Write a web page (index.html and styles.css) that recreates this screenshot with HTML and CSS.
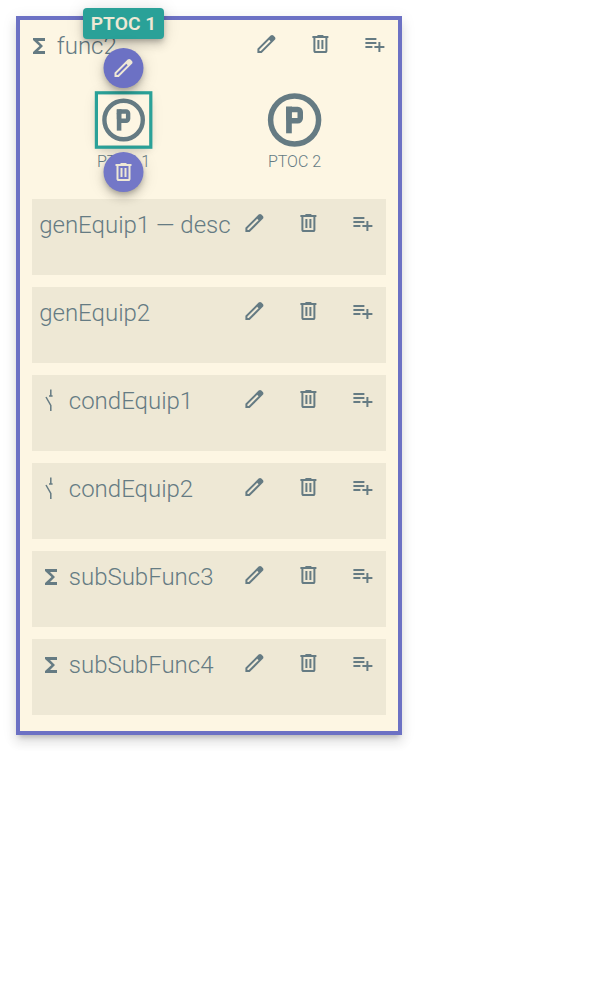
FILE: index.html
```html
<!DOCTYPE html>
<html lang="en">
<head>
<meta charset="utf-8">
<title>func2</title>
<link rel="stylesheet" href="styles.css">
</head>
<body>
<svg class="defs" aria-hidden="true">
  <symbol id="edit" viewBox="0 -960 960 960"><path d="M200-200h57l391-391-57-57-391 391v57Zm-80 80v-170l528-527q12-11 26.500-17t30.500-6q16 0 31 6t26 18l55 56q12 11 17.500 26t5.500 30q0 16-5.500 30.500T817-647L290-120H120Zm528-471-57-57 113-112 56 56Z"/></symbol>
  <symbol id="delete" viewBox="0 0 24 24"><path d="M7 21q-.825 0-1.412-.587Q5 19.825 5 19V6H4V4h5V3h6v1h5v2h-1v13q0 .825-.587 1.413Q17.825 21 17 21ZM17 6H7v13h10ZM9 17h2V8H9Zm4 0h2V8h-2ZM7 6v13Z"/></symbol>
  <symbol id="add" viewBox="0 0 24 24"><path d="M3 16v-2h7v2Zm0-4v-2h11v2Zm0-4V6h11v2Zm13 12v-4h-4v-2h4v-4h2v4h4v2h-4v4Z"/></symbol>
  <symbol id="functions" viewBox="0 0 24 24"><path d="M18 4H6v2l6.500 6L6 18v2h12v-3h-7l5-5-5-5h7Z"/></symbol>
  <symbol id="switch" viewBox="0 0 24 24"><path class="line" d="M11.800 .5v7M10 7h3.600M7 8l4.800 8.500v5.500"/></symbol>
  <symbol id="protection" viewBox="0 0 64 64">
    <circle class="ring" cx="32" cy="32" r="24"/>
    <rect x="23.500" y="18.700" width="5.700" height="26.600"/>
    <rect class="bowl" x="26.250" y="21.450" width="11.400" height="11.400" rx="2.500"/>
    <rect x="23.500" y="18.700" width="5.700" height="6"/>
  </symbol>
</svg>
<main class="pane">
  <header class="bar">
    <h1 class="title"><svg class="icon lead"><use href="#functions"/></svg>func2</h1>
    <nav class="actions"><svg class="icon"><use href="#edit"/></svg><svg class="icon"><use href="#delete"/></svg><svg class="icon"><use href="#add"/></svg></nav>
  </header>
  <section class="nodes">
    <div class="node">
      <svg class="symbol selected"><use href="#protection"/></svg>
      <span class="caption">PTOC 1</span>
      <span class="tag">PTOC 1</span>
      <button class="fab top" aria-label="Edit"><svg class="icon"><use href="#edit"/></svg></button>
      <button class="fab bottom" aria-label="Delete"><svg class="icon"><use href="#delete"/></svg></button>
    </div>
    <div class="node">
      <svg class="symbol"><use href="#protection"/></svg>
      <span class="caption">PTOC 2</span>
    </div>
  </section>
  <section class="children">
    <article class="child bar">
      <h2 class="title">genEquip1 — desc</h2>
      <nav class="actions"><svg class="icon"><use href="#edit"/></svg><svg class="icon"><use href="#delete"/></svg><svg class="icon"><use href="#add"/></svg></nav>
    </article>
    <article class="child bar">
      <h2 class="title">genEquip2</h2>
      <nav class="actions"><svg class="icon"><use href="#edit"/></svg><svg class="icon"><use href="#delete"/></svg><svg class="icon"><use href="#add"/></svg></nav>
    </article>
    <article class="child bar">
      <h2 class="title"><svg class="icon lead"><use href="#switch"/></svg>condEquip1</h2>
      <nav class="actions"><svg class="icon"><use href="#edit"/></svg><svg class="icon"><use href="#delete"/></svg><svg class="icon"><use href="#add"/></svg></nav>
    </article>
    <article class="child bar">
      <h2 class="title"><svg class="icon lead"><use href="#switch"/></svg>condEquip2</h2>
      <nav class="actions"><svg class="icon"><use href="#edit"/></svg><svg class="icon"><use href="#delete"/></svg><svg class="icon"><use href="#add"/></svg></nav>
    </article>
    <article class="child bar">
      <h2 class="title"><svg class="icon lead"><use href="#functions"/></svg>subSubFunc3</h2>
      <nav class="actions"><svg class="icon"><use href="#edit"/></svg><svg class="icon"><use href="#delete"/></svg><svg class="icon"><use href="#add"/></svg></nav>
    </article>
    <article class="child bar">
      <h2 class="title"><svg class="icon lead"><use href="#functions"/></svg>subSubFunc4</h2>
      <nav class="actions"><svg class="icon"><use href="#edit"/></svg><svg class="icon"><use href="#delete"/></svg><svg class="icon"><use href="#add"/></svg></nav>
    </article>
  </section>
</main>
</body>
</html>
```
FILE: styles.css
```css
* { box-sizing: border-box; }
body {
  margin: 0;
  padding: 16px;
  background: #fff;
  color: #657b83;
  font-family: Roboto, sans-serif;
}
.defs { position: absolute; width: 0; height: 0; }
.pane {
  width: 386px;
  height: 719px;
  border: 4px solid #6c71c4;
  background: #fdf6e3;
  box-shadow: 0 8px 10px 1px rgba(0,0,0,.07), 0 3px 14px 2px rgba(0,0,0,.06), 0 5px 5px -3px rgba(0,0,0,.2);
}
.bar {
  display: flex;
  justify-content: space-between;
  align-items: flex-start;
}
.title {
  display: flex;
  margin: 0;
  padding: 4px 0 0 7.2px;
  font-size: 24px;
  font-weight: 300;
  line-height: 44px;
  white-space: nowrap;
}
.icon {
  display: block;
  width: 24px;
  height: 24px;
  fill: currentColor;
}
.lead { margin: 10px 5.6px 0 0; }
.line { fill: none; stroke: currentColor; stroke-width: 1.5; }
.actions {
  display: flex;
  gap: 30px;
  padding: 12px 12px 0 0;
}
.actions .icon { transform: translateX(.4px); }
.nodes {
  display: grid;
  grid-template-columns: 159px 159px;
  gap: 12px;
  height: 131px;
  padding: 20px 24px 0;
}
.node {
  position: relative;
  display: flex;
  flex-direction: column;
  align-items: center;
}
.symbol { display: block; width: 64px; height: 64px; fill: currentColor; flex: none; transform: translateX(-.4px); }
.selected { transform: translateX(-.4px) scale(.8); outline: 4px solid #2aa198; box-shadow: 0 6px 10px rgba(0,0,0,.14), 0 1px 18px rgba(0,0,0,.12); background: #fdf6e3; }
.ring, .bowl { fill: none; stroke: currentColor; stroke-width: 5.5; }
.caption { font-size: 16px; font-weight: 300; line-height: 19px; }
.tag, .fab { position: absolute; box-shadow: 0 3px 5px -1px rgba(0,0,0,.2), 0 6px 10px rgba(0,0,0,.14), 0 1px 18px rgba(0,0,0,.12); }
.tag {
  top: -80px;
  height: 30.5px;
  padding: 0 8px;
  border-radius: 4px;
  background: #2aa198;
  color: #eee8d5;
  font-size: 19.2px;
  font-weight: 600;
  line-height: 32px;
  white-space: nowrap;
}
.fab {
  width: 40px;
  height: 40px;
  padding: 8px;
  border: 0;
  border-radius: 50%;
  background: #6c71c4;
  color: #eee8d5;
  transform: translateX(-.5px);
}
.top { top: -40px; }
.bottom { top: 64px; background: #7377c7; }
.children { display: grid; gap: 12px; padding: 0 12px; }
.child { height: 76px; background: #eee8d5; }
```
